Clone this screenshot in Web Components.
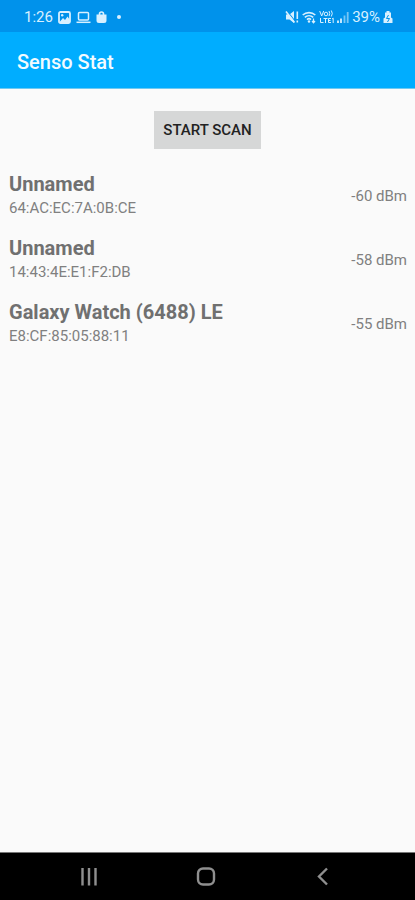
<!DOCTYPE html>
<html lang="en">
<head>
<meta charset="utf-8">
<meta name="viewport" content="width=device-width, initial-scale=1">
<title>Senso Stat</title>
<style>
html, body { margin: 0; min-height: 100%; background: #fafafa; }
body { font-family: Roboto, "Noto Sans", sans-serif; color: #757575; }
</style>
</head>
<body>
<scan-screen></scan-screen>
<script>
function define(name, html) {
  const template = document.createElement('template');
  template.innerHTML = html;
  customElements.define(name, class extends HTMLElement {
    constructor() {
      super();
      this.attachShadow({ mode: 'open' }).append(template.content.cloneNode(true));
    }
  });
}

define('status-bar', `
<style>
:host { display: flex; justify-content: space-between; align-items: center; height: 32px; box-sizing: border-box; padding: 2px 22px 0 24px; background: #0092eb; color: #d8f0ff; font-size: 15px; line-height: 20px; }
div { display: flex; align-items: center; gap: 3px; }
svg { display: block; fill: none; stroke: currentColor; }
.alerts { gap: 5px; }
.dot { margin-left: 5px; }
</style>
<div class="alerts">
  <span>1:26</span>
  <svg width="13" height="13" viewBox="0 0 13 13" aria-hidden="true"><rect x="1" y="1" width="11" height="11" rx="1.5" stroke-width="1.8"/><path d="M2 10.5 5 7l2 2 2.500-3.500L12 9v3H2z" fill="currentColor" stroke="none"/><circle cx="4.200" cy="4.200" r="1.200" fill="currentColor" stroke="none"/></svg>
  <svg width="15" height="13" viewBox="0 0 15 13" stroke-width="1.500" aria-hidden="true"><rect x="2.500" y="1.500" width="10" height="7.500" rx="1"/><path d="M.5 11.300h14"/></svg>
  <svg width="11" height="13" viewBox="0 0 11 13" aria-hidden="true"><path d="M.5 3.500h10v6a2.500 2.500 0 0 1-2.500 2.500h-5a2.500 2.500 0 0 1-2.500-2.500z" fill="currentColor" stroke="none"/><path d="M3.500 4V3a2 2 0 0 1 4 0v1" stroke-width="1.600"/></svg>
  <svg class="dot" width="4" height="4" viewBox="0 0 4 4" aria-hidden="true"><circle cx="2" cy="2" r="2" fill="currentColor" stroke="none"/></svg>
</div>
<div>
  <svg width="14" height="14" viewBox="0 0 14 14" aria-hidden="true"><path d="M1 4.500h3.500L9 1v12L4.500 9.500H1z" fill="currentColor" stroke="none"/><path d="M2 1l8 10" stroke="#0092eb" stroke-width="1.200"/><path d="M1 1.500l8.500 11M12.300 1.500v7.500M12.300 10.500v2" stroke-width="1.600"/></svg>
  <svg width="14" height="14" viewBox="0 0 14 14" stroke-width="1.600" aria-hidden="true"><path d="M.7 5a9.500 9.500 0 0 1 12.600 0M2.800 7.400a6.300 6.300 0 0 1 8.400 0M5 9.600a3 3 0 0 1 4 0"/><circle cx="7" cy="11.500" r="1.200" fill="currentColor" stroke="none"/><path d="M11.500 8.500v4M10 11l1.500 1.800L13 11" stroke-width="1.200"/></svg>
  <svg width="15" height="14" viewBox="0 0 15 14" stroke-width="1" aria-hidden="true"><path d="M.7 1 2.700 6 4.700 1M10 1q1.500 2.500 0 5M12.300.5q2 3 0 6M1.500 8v4.500h3M4.500 8.500h4M6.500 8.500v4.500M12 8.500H9.500v4H12M9.500 10.500h2M13 9l1.200-.8V13"/><circle cx="7" cy="4" r="1.800"/></svg>
  <svg width="12" height="13" viewBox="0 0 12 13" aria-hidden="true"><path d="M1 12V9.500M4 12V7.500" stroke-width="1.800"/><path d="M7.500 12V4.500M10.700 12V1" stroke-width="1.800" opacity=".55"/></svg>
  <span>39%</span>
  <svg width="10" height="14" viewBox="0 0 10 14" aria-hidden="true"><path d="M3.500 1h3v1.500H8v5l1.500 1V13H.5V8.500l1.500-1v-5h1.500z" fill="currentColor" stroke="none"/><path d="M5.500 5 3.500 8.500h3L4.500 12" stroke="#0092eb" stroke-width="1"/></svg>
</div>`);

define('app-bar', `
<style>
:host { display: flex; align-items: center; height: 57px; box-sizing: border-box; padding: 4px 17px 0; background: #00adff; border-bottom: 1px solid #6fc9f2; color: #f2fbff; }
h1 { margin: 0; font-size: 20px; line-height: 24px; font-weight: 500; }
</style>
<h1><slot></slot></h1>`);

define('scan-button', `
<style>
:host { display: flex; justify-content: center; padding: 22px 0 15px; }
button { border: 0; padding: 0 9px; height: 38px; background: #d6d7d7; color: #222; font: 500 15px/20px Roboto, "Noto Sans", sans-serif; }
</style>
<button type="button"><slot></slot></button>`);

define('device-row', `
<style>
:host { display: flex; justify-content: space-between; align-items: center; height: 64px; box-sizing: border-box; padding: 0 8px 0 9px; }
.name { font-size: 20px; line-height: 24px; font-weight: 700; color: #707070; }
.address, .signal { font-size: 15px; line-height: 24px; color: #808080; }
.signal { white-space: nowrap; }
</style>
<div><div class="name"><slot name="name"></slot></div><div class="address"><slot name="address"></slot></div></div>
<div class="signal"><slot name="signal"></slot></div>`);

define('system-nav', `
<style>
:host { display: grid; grid-template-columns: repeat(3, 1fr); height: 48px; box-sizing: border-box; padding: 0 34px 0 31px; background: #000; border-top: 1px solid #777; color: #8f8f8f; }
button { border: 0; padding: 0; background: none; color: inherit; display: grid; place-items: center; }
svg { display: block; fill: none; stroke: currentColor; stroke-width: 2.400; }
</style>
<button type="button" aria-label="Recent apps"><svg width="20" height="20" viewBox="0 0 20 20"><path d="M3.500 1v17.500M10 1v17.500M16.500 1v17.500"/></svg></button>
<button type="button" aria-label="Home"><svg width="20" height="20" viewBox="0 0 20 20"><rect x="2" y="1.500" width="16" height="16" rx="5"/></svg></button>
<button type="button" aria-label="Back"><svg width="20" height="20" viewBox="0 0 20 20"><path d="M14 1.500 6 9.500l8 8"/></svg></button>`);

define('scan-screen', `
<style>
:host { display: flex; flex-direction: column; min-height: 100vh; }
main { flex: 1; }
</style>
<status-bar></status-bar>
<app-bar>Senso Stat</app-bar>
<main>
  <scan-button>START SCAN</scan-button>
  <device-row><span slot="name">Unnamed</span><span slot="address">64:AC:EC:7A:0B:CE</span><span slot="signal">-60 dBm</span></device-row>
  <device-row><span slot="name">Unnamed</span><span slot="address">14:43:4E:E1:F2:DB</span><span slot="signal">-58 dBm</span></device-row>
  <device-row><span slot="name">Galaxy Watch (6488) LE</span><span slot="address">E8:CF:85:05:88:11</span><span slot="signal">-55 dBm</span></device-row>
</main>
<system-nav></system-nav>`);
</script>
</body>
</html>
